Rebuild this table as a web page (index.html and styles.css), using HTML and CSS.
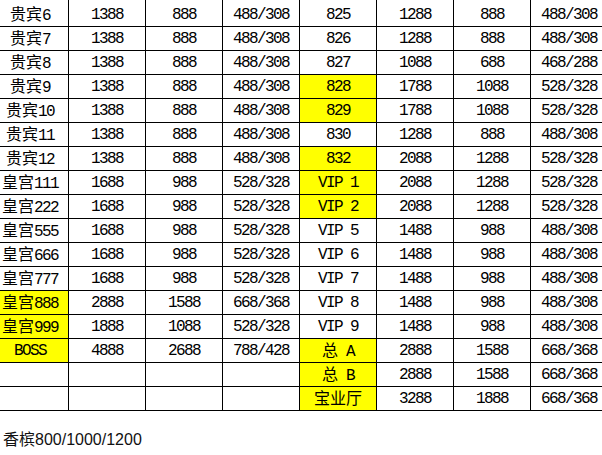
FILE: index.html
```html
<!DOCTYPE html>
<html>
<head>
<meta charset="utf-8">
<link rel="stylesheet" href="styles.css">
</head>
<body>
<table class="price">
<tbody>
<tr class="first"><td><span class="c">贵宾</span>6</td><td>1388</td><td>888</td><td>488/308</td><td>825</td><td>1288</td><td>888</td><td>488/308</td></tr>
<tr><td><span class="c">贵宾</span>7</td><td>1388</td><td>888</td><td>488/308</td><td>826</td><td>1288</td><td>888</td><td>488/308</td></tr>
<tr><td><span class="c">贵宾</span>8</td><td>1388</td><td>888</td><td>488/308</td><td>827</td><td>1088</td><td>688</td><td>468/288</td></tr>
<tr><td><span class="c">贵宾</span>9</td><td>1388</td><td>888</td><td>488/308</td><td class="hl">828</td><td>1788</td><td>1088</td><td>528/328</td></tr>
<tr><td><span class="c">贵宾</span>10</td><td>1388</td><td>888</td><td>488/308</td><td class="hl">829</td><td>1788</td><td>1088</td><td>528/328</td></tr>
<tr><td><span class="c">贵宾</span>11</td><td>1388</td><td>888</td><td>488/308</td><td>830</td><td>1288</td><td>888</td><td>488/308</td></tr>
<tr><td><span class="c">贵宾</span>12</td><td>1388</td><td>888</td><td>488/308</td><td class="hl">832</td><td>2088</td><td>1288</td><td>528/328</td></tr>
<tr><td><span class="c">皇宫</span>111</td><td>1688</td><td>988</td><td>528/328</td><td class="hl">VIP 1</td><td>2088</td><td>1288</td><td>528/328</td></tr>
<tr><td><span class="c">皇宫</span>222</td><td>1688</td><td>988</td><td>528/328</td><td class="hl">VIP 2</td><td>2088</td><td>1288</td><td>528/328</td></tr>
<tr><td><span class="c">皇宫</span>555</td><td>1688</td><td>988</td><td>528/328</td><td>VIP 5</td><td>1488</td><td>988</td><td>488/308</td></tr>
<tr><td><span class="c">皇宫</span>666</td><td>1688</td><td>988</td><td>528/328</td><td>VIP 6</td><td>1488</td><td>988</td><td>488/308</td></tr>
<tr><td><span class="c">皇宫</span>777</td><td>1688</td><td>988</td><td>528/328</td><td>VIP 7</td><td>1488</td><td>988</td><td>488/308</td></tr>
<tr><td class="hl"><span class="c">皇宫</span>888</td><td>2888</td><td>1588</td><td>668/368</td><td>VIP 8</td><td>1488</td><td>988</td><td>488/308</td></tr>
<tr><td class="hl"><span class="c">皇宫</span>999</td><td>1888</td><td>1088</td><td>528/328</td><td>VIP 9</td><td>1488</td><td>988</td><td>488/308</td></tr>
<tr><td class="hl">BOSS</td><td>4888</td><td>2688</td><td>788/428</td><td class="hl"><span class="c">总</span> A</td><td>2888</td><td>1588</td><td>668/368</td></tr>
<tr><td></td><td></td><td></td><td></td><td class="hl"><span class="c">总</span> B</td><td>2888</td><td>1588</td><td>668/368</td></tr>
<tr><td></td><td></td><td></td><td></td><td class="hl"><span class="c">宝业厅</span></td><td>3288</td><td>1888</td><td>668/368</td></tr>
</tbody>
</table>
<p class="note">香槟800/1000/1200</p>
</body>
</html>
```

FILE: styles.css
```css
html, body {
  margin: 0;
  padding: 0;
  background: #fff;
  overflow: hidden;
}

.price {
  border-collapse: separate;
  border-spacing: 0;
  table-layout: fixed;
  width: 616px;
  margin-left: -8px;
}

.price td {
  box-sizing: border-box;
  width: 77px;
  min-width: 77px;
  height: 24px;
  padding: 0;
  border: none;
  border-right: 1px solid #000;
  border-bottom: 1px solid #000;
  text-align: center;
  vertical-align: middle;
  font-family: "Liberation Mono", "Noto Sans CJK SC", monospace;
  font-size: 16px;
  letter-spacing: -1.6px;
  line-height: 18px;
  color: #000;
  white-space: nowrap;
}

.price .first td {
  height: 27px;
  padding-top: 3px;
}

.price td.hl {
  background: #ffff00;
}

.c {
  font-family: "Noto Sans CJK SC", sans-serif;
  letter-spacing: 0;
}

.note {
  margin: 19px 0 0 3px;
  font-family: "Liberation Sans", "Noto Sans CJK SC", sans-serif;
  font-size: 16px;
  line-height: 20px;
  color: #111;
}
```
